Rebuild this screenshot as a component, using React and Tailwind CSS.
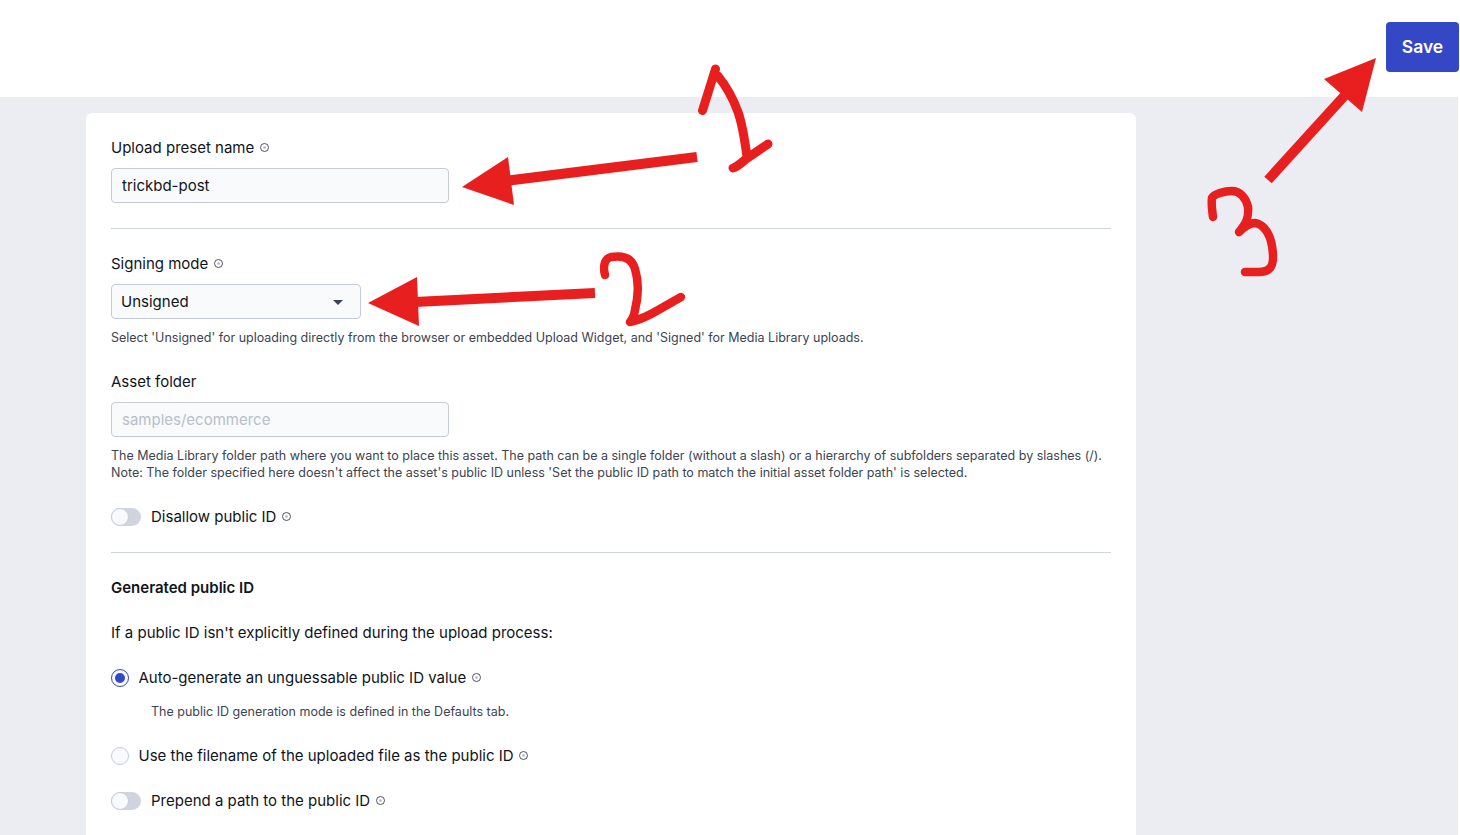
function InfoIcon() {
  return (
    <svg width="9" height="9" viewBox="0 0 9 9" fill="none" className="relative -top-[0.5px] ml-[5.5px] shrink-0 text-[#3c4250]" aria-hidden>
      <circle cx="4.5" cy="4.5" r="4" stroke="currentColor" strokeWidth="0.9" />
      <circle cx="4.5" cy="4.5" r="1.3" fill="currentColor" opacity="0.4" />
    </svg>
  )
}

function Label({ children, info = true }) {
  return (
    <div className="flex h-5 items-center text-[15px] leading-5 text-[#0f1420]">
      <span>{children}</span>
      {info && <InfoIcon />}
    </div>
  )
}

function TextInput({ value, placeholder }) {
  return (
    <input
      readOnly
      value={value}
      placeholder={placeholder}
      className="mt-2.5 block h-[35px] w-[338px] rounded-[4px] border border-[#c5cbd9] bg-[#f9fafc] px-2.5 text-[15px] text-[#0f1420] outline-none placeholder:text-[#b7bfcc]"
    />
  )
}

function Help({ children, className = '' }) {
  return <p className={`text-[12.5px] leading-[17px] text-[#3c4452] ${className}`}>{children}</p>
}

function Toggle({ label, className = '' }) {
  return (
    <div className={`flex h-5 items-center ${className}`}>
      <div className="flex h-[18px] w-[30px] items-center rounded-full bg-[#d0d4de]">
        <div className="h-[18px] w-[18px] rounded-full border border-[#c5cbd9] bg-[#f9fafc]" />
      </div>
      <div className="ml-2.5">
        <Label>{label}</Label>
      </div>
    </div>
  )
}

function Radio({ label, checked, className = '' }) {
  return (
    <div className={`flex h-5 items-center ${className}`}>
      <div
        className={`flex h-[18px] w-[18px] items-center justify-center rounded-full border bg-[#f9fafc] ${
          checked ? 'border-[#3448c5]' : 'border-[#c5cbd9]'
        }`}
      >
        {checked && <div className="h-2.5 w-2.5 rounded-full bg-[#3448c5]" />}
      </div>
      <div className="ml-[9.5px]">
        <Label>{label}</Label>
      </div>
    </div>
  )
}

function Divider({ className = '' }) {
  return <div className={`h-px w-full bg-[#d0d4de] ${className}`} />
}

// Red hand-drawn marks that sit on top of the page
function Annotations() {
  const red = '#e81f1f'
  return (
    <svg width="1460" height="835" viewBox="0 0 1460 835" fill="none" className="pointer-events-none absolute left-0 top-0" aria-hidden>
      {/* arrow to preset name */}
      <path d="M697 157 L505 181" stroke={red} strokeWidth="10" />
      <polygon points="462,187 508,157 514,205" fill={red} />
      <path
        d="M702.500 110.500 L715.500 69 M718 76 C726 86 733 98 738 112 C743 126 745 142 747 157 M733 168 C737 167 740 164 746 159 L768 144"
        stroke={red}
        strokeWidth="9"
        strokeLinecap="round"
        strokeLinejoin="round"
      />
      {/* arrow to signing mode */}
      <path d="M595 293 L415 302" stroke={red} strokeWidth="10" />
      <polygon points="368,303 417,277 419,326" fill={red} />
      <path
        d="M605 275 C603 267 604 259 611 257 C623 255 632 258 635 269 C639 282 638 298 635 310 C634 316 632 320 630 322 C640 320 650 315 660 309 L681 297"
        stroke={red}
        strokeWidth="8.500"
        strokeLinecap="round"
        strokeLinejoin="round"
      />
      {/* arrow to save */}
      <path d="M1268 180 L1347 93" stroke={red} strokeWidth="10" />
      <polygon points="1376,58 1324,79 1362,112" fill={red} />
      <path
        d="M1213 217 C1212 209 1211 203 1212 198 C1214 194 1224 191 1232 191 C1240 191 1246 198 1248 207 C1249 216 1247 223 1239 232 C1243 228 1248 223 1255 223 C1263 224 1270 233 1272 246 C1274 258 1273 266 1269 269 C1265 273 1256 272 1245 272"
        stroke={red}
        strokeWidth="8.500"
        strokeLinecap="round"
        strokeLinejoin="round"
      />
    </svg>
  )
}

export default function App() {
  return (
    <div className="relative h-[835px] w-[1460px] overflow-hidden bg-white font-['Inter',sans-serif]">
      <header className="flex h-[97px] items-start justify-end pr-px pt-[22px]">
        <button className="h-[50px] w-[73px] rounded-[4px] bg-[#3448c5] text-[17.5px] font-semibold text-white">
          Save
        </button>
      </header>

      <main className="h-[738px] w-[1458px] bg-[#ecedf2] pl-[86px] pt-4">
        <section className="h-[800px] w-[1050px] rounded-t-[6px] bg-white px-[25px] pt-[25px]">
          <Label>Upload preset name</Label>
          <TextInput value="trickbd-post" />
          <Divider className="mt-[25px]" />

          <div className="mt-[25px]">
            <Label>Signing mode</Label>
          </div>
          <div className="mt-2.5 flex h-[35px] w-[250px] items-center justify-between rounded-[4px] border border-[#c5cbd9] bg-[#f9fafc] pb-px pl-[9px] pr-[17.5px] pt-0.5 text-[15px] text-[#0f1420]">
            <span>Unsigned</span>
            <span className="h-0 w-0 border-x-[5px] border-t-[5px] border-x-transparent border-t-[#3c4250]" />
          </div>
          <Help className="mt-2.5">
            Select 'Unsigned' for uploading directly from the browser or embedded Upload Widget, and 'Signed' for Media Library uploads.
          </Help>

          <div className="mt-[26px]">
            <Label info={false}>Asset folder</Label>
          </div>
          <TextInput value="" placeholder="samples/ecommerce" />
          <Help className="mt-2.5">
            The Media Library folder path where you want to place this asset. The path can be a single folder (without a slash) or a hierarchy of subfolders separated by slashes (/).
            <br />
            Note: The folder specified here doesn't affect the asset's public ID unless 'Set the public ID path to match the initial asset folder path' is selected.
          </Help>

          <Toggle label="Disallow public ID" className="mt-[26px]" />
          <Divider className="mt-[25px]" />

          <h2 className="mt-[25px] h-5 text-[15px] font-semibold leading-5 text-[#0f1420]">Generated public ID</h2>
          <div className="mt-[25px]">
            <Label info={false}>If a public ID isn't explicitly defined during the upload process:</Label>
          </div>

          <Radio checked label="Auto-generate an unguessable public ID value" className="mt-[25px]" />
          <Help className="ml-10 mt-[15px] mb-[26px]">The public ID generation mode is defined in the Defaults tab.</Help>
          <Radio label="Use the filename of the uploaded file as the public ID" />
          <Toggle label="Prepend a path to the public ID" className="mt-[25px]" />
        </section>
      </main>

      <Annotations />
    </div>
  )
}
